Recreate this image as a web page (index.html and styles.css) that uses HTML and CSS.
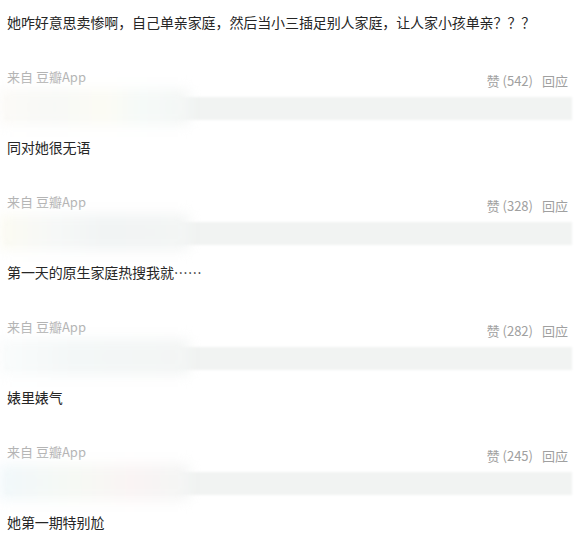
FILE: index.html
```html
<!DOCTYPE html>
<html lang="zh">
<head>
<meta charset="utf-8">
<link rel="stylesheet" href="styles.css">
</head>
<body>
<div class="list">
  <div class="comment">
    <p class="text">她咋好意思卖惨啊，自己单亲家庭，然后当小三插足别人家庭，让人家小孩单亲？？？</p>
    <div class="meta"><span class="src">来自 豆瓣App</span><span class="acts"><span>赞 (542)</span><span>回应</span></span></div>
    <div class="band"><div class="blur b1"></div></div>
  </div>
  <div class="comment">
    <p class="text">同对她很无语</p>
    <div class="meta"><span class="src">来自 豆瓣App</span><span class="acts"><span>赞 (328)</span><span>回应</span></span></div>
    <div class="band"><div class="blur b2"></div></div>
  </div>
  <div class="comment">
    <p class="text">第一天的原生家庭热搜我就……</p>
    <div class="meta"><span class="src">来自 豆瓣App</span><span class="acts"><span>赞 (282)</span><span>回应</span></span></div>
    <div class="band"><div class="blur b3"></div></div>
  </div>
  <div class="comment">
    <p class="text">婊里婊气</p>
    <div class="meta"><span class="src">来自 豆瓣App</span><span class="acts"><span>赞 (245)</span><span>回应</span></span></div>
    <div class="band"><div class="blur b4"></div></div>
  </div>
  <div class="comment last">
    <p class="text">她第一期特别尬</p>
  </div>
</div>
</body>
</html>
```
FILE: styles.css
```css
html, body {
  margin: 0;
  padding: 0;
  background: #ffffff;
}
body {
  font-family: "Noto Sans CJK SC", "Noto Sans", sans-serif;
  height: 558px;
  overflow: hidden;
}
.list {
  padding: 13px 8px 0 7px;
  display: flex;
  flex-direction: column;
}
.comment {
  height: 125px;
  display: flex;
  flex-direction: column;
}
.comment.last {
  height: auto;
}
.text {
  margin: 0;
  font-size: 14px;
  line-height: 18px;
  color: #262626;
  letter-spacing: -0.1px;
}
.meta {
  margin-top: 37px;
  display: flex;
  justify-content: space-between;
  align-items: flex-start;
  font-size: 13px;
  line-height: 18px;
}
.src {
  color: #b4b4b4;
}
.acts {
  padding-top: 4px;
  padding-right: 4px;
  color: #a0a0a0;
  display: flex;
  gap: 9px;
}
.band {
  position: relative;
  margin: 7px 0 0 -2px;
  width: 567px;
  height: 23px;
  background: #f1f3f2;
  filter: blur(1px);
}
.blur {
  position: absolute;
  left: -6px;
  top: -8px;
  width: 190px;
  height: 36px;
  filter: blur(6px);
}
.b1 {
  background: linear-gradient(90deg, #fcfaf7 0%, #f7f9f6 30%, #fcfbf4 55%, #f5faf8 75%, #f4f6f5 100%);
}
.b2 {
  background: linear-gradient(90deg, #fcfbf2 0%, #f6f8f7 30%, #f1f4f4 55%, #f3f5f4 100%);
}
.b3 {
  background: linear-gradient(90deg, #fafcfc 0%, #f3f7f7 40%, #f3f5f4 100%);
}
.b4 {
  background: linear-gradient(90deg, #f1f8fb 0%, #f6f9f4 40%, #faf4f4 70%, #f3f5f4 100%);
}
```
